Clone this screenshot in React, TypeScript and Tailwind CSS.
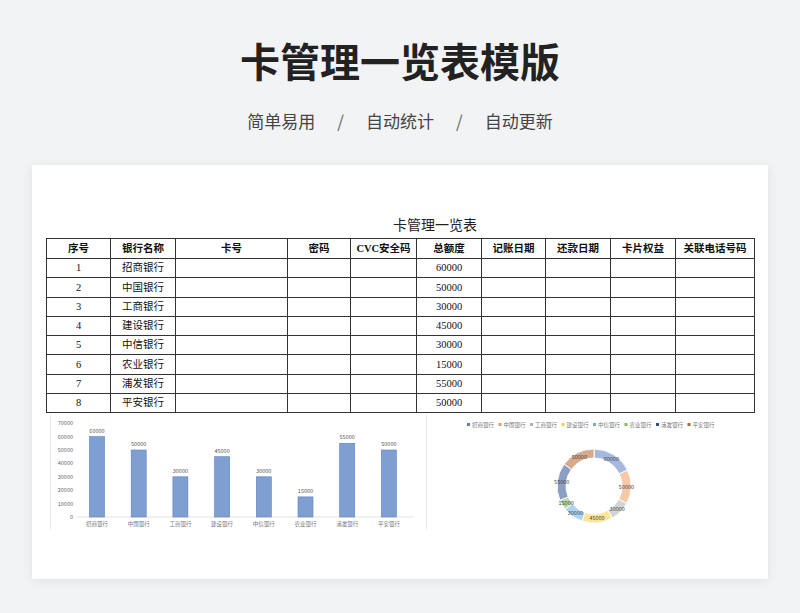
const banks = ["招商银行","中国银行","工商银行","建设银行","中信银行","农业银行","浦发银行","平安银行"];
const vals = [60000,50000,30000,45000,30000,15000,55000,50000];
const cols = [64,65,112,63,66,65,64,65,65,79];
const heads = ["序号","银行名称","卡号","密码","CVC安全码","总额度","记账日期","还款日期","卡片权益","关联电话号码"];
const colors = ["#5b7fc4","#ed9a5c","#b0b0b0","#f5cf45","#6aaee0","#7cbf5a","#2f4f94","#b8652e"];

function Bar() {
  const y0 = 102, k = 13.4 / 10000;
  return (
    <svg width="367" height="114" viewBox="0 0 367 114">
      {[0,1,2,3,4,5,6,7].map(i => (
        <text key={i} x="22" y={y0 - i * 13.4 + 2} fontSize="5.5" fill="#666" textAnchor="end">{i * 10000}</text>
      ))}
      <line x1="26" y1={y0} x2="362" y2={y0} stroke="#ccc" strokeWidth="0.6" />
      {vals.map((v, i) => {
        const cx = 46 + i * 41.7, h = v * k;
        return (
          <g key={i}>
            <rect x={cx - 7.5} y={y0 - h} width="15" height={h} fill="#7f9fd3" stroke="#5b7fc4" strokeWidth="0.6" />
            <text x={cx} y={y0 - h - 4} fontSize="5.5" fill="#555" textAnchor="middle">{v}</text>
            <text x={cx} y={y0 + 9} fontSize="5.5" fill="#777" textAnchor="middle">{banks[i]}</text>
          </g>
        );
      })}
    </svg>
  );
}

function Donut() {
  const cx = 167, cy = 71, ro = 37, ri = 28;
  const total = vals.reduce((a, b) => a + b, 0);
  let a = -Math.PI / 2;
  const segs = vals.map((v, i) => {
    const a1 = a, a2 = a + (v / total) * Math.PI * 2; a = a2;
    const p = (r: number, t: number) => `${cx + r * Math.cos(t)},${cy + r * Math.sin(t)}`;
    const large = a2 - a1 > Math.PI ? 1 : 0;
    const d = `M${p(ro,a1)} A${ro},${ro} 0 ${large} 1 ${p(ro,a2)} L${p(ri,a2)} A${ri},${ri} 0 ${large} 0 ${p(ri,a1)} Z`;
    const m = (a1 + a2) / 2, rm = (ro + ri) / 2;
    return (
      <g key={i}>
        <path d={d} fill={colors[i]} fillOpacity="0.55" stroke="#fff" strokeWidth="1" />
        <text x={cx + rm * Math.cos(m)} y={cy + rm * Math.sin(m) + 2} fontSize="5.5" fill="#444" textAnchor="middle">{v}</text>
      </g>
    );
  });
  return (
    <svg width="331" height="114" viewBox="0 0 331 114">
      {banks.map((b, i) => (
        <g key={i}>
          <rect x={40 + i * 31.5} y="8" width="3" height="3" fill={colors[i]} />
          <text x={45 + i * 31.5} y="11.5" fontSize="5.5" fill="#777">{b}</text>
        </g>
      ))}
      {segs}
    </svg>
  );
}

export default function App() {
  return (
    <div className="w-[800px] h-[613px] bg-[#f2f3f5] flex flex-col items-center" style={{ fontFamily: '"Noto Sans CJK SC", "Noto Sans", sans-serif' }}>
      <h1 className="mt-[32px] text-[40px] leading-[56px] font-bold text-[#222]">卡管理一览表模版</h1>
      <div className="mt-[21px] flex items-center gap-[22px] text-[17px] text-[#444] leading-[24px]">
        <span>简单易用</span><span className="text-[#666]">/</span><span>自动统计</span><span className="text-[#666]">/</span><span>自动更新</span>
      </div>
      <div className="mt-[32px] w-[736px] h-[414px] bg-white shadow-[0_2px_10px_rgba(0,0,0,0.08)] flex flex-col px-[14px] pt-[49px]" style={{ fontFamily: '"Liberation Serif", "Noto Sans CJK SC", serif' }}>
        <div className="text-center text-[14px] leading-[24px] text-[#222] pl-[70px]">卡管理一览表</div>
        <table className="border-collapse text-[10.5px] text-[#111] table-fixed w-[708px]">
          <colgroup>{cols.map((w, i) => <col key={i} style={{ width: w }} />)}</colgroup>
          <thead>
            <tr className="h-[20px]">{heads.map(h => <th key={h} className="border border-[#333] font-bold p-0">{h}</th>)}</tr>
          </thead>
          <tbody>
            {banks.map((b, i) => (
              <tr key={b} className="h-[19.3px]">
                <td className="border border-[#333] text-center p-0">{i + 1}</td>
                <td className="border border-[#333] text-center p-0">{b}</td>
                <td className="border border-[#333]" /><td className="border border-[#333]" /><td className="border border-[#333]" />
                <td className="border border-[#333] text-center p-0">{vals[i]}</td>
                <td className="border border-[#333]" /><td className="border border-[#333]" /><td className="border border-[#333]" /><td className="border border-[#333]" />
              </tr>
            ))}
          </tbody>
        </table>
        <div className="flex mt-[2px] gap-[8px]" style={{ fontFamily: '"Noto Sans CJK SC", sans-serif' }}>
          <div className="border-l border-[#e5e5e5] ml-[4px]"><Bar /></div>
          <div className="border-l border-[#e5e5e5]"><Donut /></div>
        </div>
      </div>
    </div>
  );
}
